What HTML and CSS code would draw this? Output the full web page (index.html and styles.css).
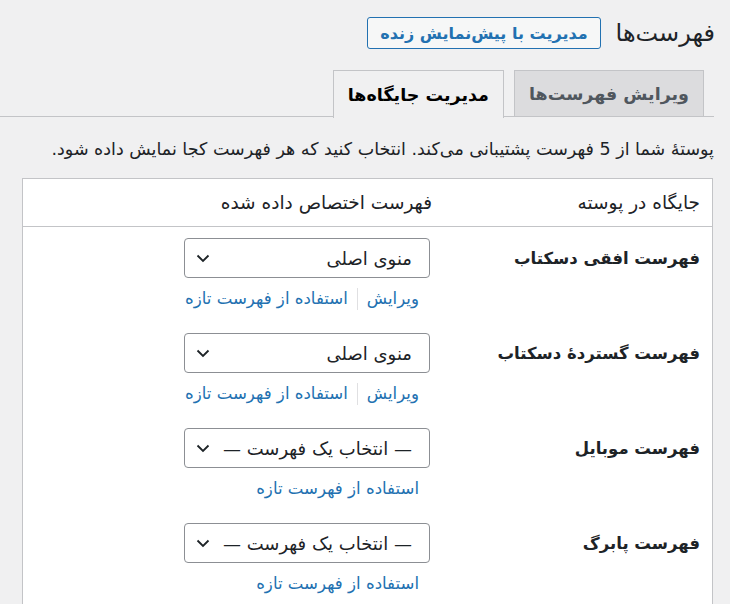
FILE: index.html
```html
<!DOCTYPE html>
<html lang="fa" dir="rtl">
<head>
<meta charset="utf-8">
<title>فهرست‌ها</title>
<link rel="stylesheet" href="styles.css">
</head>
<body>
<div class="wrap">
  <div class="title-row">
    <h1 class="title">فهرست‌ها</h1>
    <a class="title-action" href="#">مدیریت با پیش‌نمایش زنده</a>
  </div>
  <nav class="tabs">
    <a class="tab" href="#">ویرایش فهرست‌ها</a>
    <a class="tab tab-active" href="#">مدیریت جایگاه‌ها</a>
  </nav>
  <p class="desc">پوستهٔ شما از 5 فهرست پشتیبانی می‌کند. انتخاب کنید که هر فهرست کجا نمایش داده شود.</p>
  <div class="table">
    <div class="thead">
      <div class="th-loc">جایگاه در پوسته</div>
      <div class="th-menu">فهرست اختصاص داده شده</div>
    </div>
    <div class="row">
      <div class="label">فهرست افقی دسکتاب</div>
      <div class="cell">
        <div class="select"><span>منوی اصلی</span><svg class="chev" viewBox="0 0 14 9" width="14" height="9"><path d="M1.5 1.5 L7 7 L12.5 1.5" fill="none" stroke="#1d2327" stroke-width="1.8"/></svg></div>
        <div class="links"><a href="#">ویرایش</a><span class="sep"></span><a href="#">استفاده از فهرست تازه</a></div>
      </div>
    </div>
    <div class="row">
      <div class="label">فهرست گستردهٔ دسکتاب</div>
      <div class="cell">
        <div class="select"><span>منوی اصلی</span><svg class="chev" viewBox="0 0 14 9" width="14" height="9"><path d="M1.5 1.5 L7 7 L12.5 1.5" fill="none" stroke="#1d2327" stroke-width="1.8"/></svg></div>
        <div class="links"><a href="#">ویرایش</a><span class="sep"></span><a href="#">استفاده از فهرست تازه</a></div>
      </div>
    </div>
    <div class="row">
      <div class="label">فهرست موبایل</div>
      <div class="cell">
        <div class="select"><span>— انتخاب یک فهرست —</span><svg class="chev" viewBox="0 0 14 9" width="14" height="9"><path d="M1.5 1.5 L7 7 L12.5 1.5" fill="none" stroke="#1d2327" stroke-width="1.8"/></svg></div>
        <div class="links"><a href="#">استفاده از فهرست تازه</a></div>
      </div>
    </div>
    <div class="row">
      <div class="label">فهرست پابرگ</div>
      <div class="cell">
        <div class="select"><span>— انتخاب یک فهرست —</span><svg class="chev" viewBox="0 0 14 9" width="14" height="9"><path d="M1.5 1.5 L7 7 L12.5 1.5" fill="none" stroke="#1d2327" stroke-width="1.8"/></svg></div>
        <div class="links"><a href="#">استفاده از فهرست تازه</a></div>
      </div>
    </div>
  </div>
</div>
</body>
</html>
```
FILE: styles.css
```css
html, body {
  margin: 0;
  padding: 0;
  background: #f0f0f1;
}
body {
  direction: rtl;
  font-family: "DejaVu Sans", sans-serif;
  color: #1d2327;
  overflow: hidden;
  height: 604px;
}
.wrap {
  padding: 17px 15px 0 0;
}
.title-row {
  display: flex;
  align-items: center;
  gap: 15px;
  height: 32px;
  padding-left: 22px;
}
.title {
  margin: 0;
  font-size: 24px;
  font-weight: 400;
  line-height: 32px;
  color: #1d2327;
}
.title-action {
  display: inline-flex;
  align-items: center;
  height: 30px;
  padding: 0 12px;
  border: 1px solid #2271b1;
  border-radius: 3px;
  background: #f6f7f7;
  color: #2271b1;
  font-size: 16px;
  font-weight: 700;
  text-decoration: none;
}
.tabs {
  display: flex;
  gap: 10px;
  margin-top: 21px;
  margin-right: 1px;
  padding-right: 10px;
  border-bottom: 1px solid #c3c4c7;
  height: 46px;
}
.tab {
  display: flex;
  align-items: center;
  padding: 0 14px;
  border: 1px solid #c3c4c7;
  border-bottom: none;
  background: #dcdcde;
  color: #50575e;
  font-size: 17.5px;
  font-weight: 700;
  text-decoration: none;
}
.tab-active {
  background: #f0f0f1;
  color: #000;
  height: 47px;
}
.desc {
  margin: 22px 1px 0 0;
  font-size: 17.5px;
  line-height: 20px;
  color: #1d2327;
}
.table {
  margin: 19px 2px 0 22px;
  background: #fff;
  border: 1px solid #c3c4c7;
}
.thead {
  display: grid;
  grid-template-columns: 282px 1fr;
  height: 47px;
  align-items: center;
  border-bottom: 1px solid #c3c4c7;
  font-size: 18.5px;
}
.th-loc {
  padding-right: 12px;
}
.th-menu {
  margin-right: -2px;
}
.row {
  display: grid;
  grid-template-columns: 282px 1fr;
  height: 95px;
  align-items: start;
}
.label {
  padding: 22px 12px 0 0;
  font-size: 16.5px;
  font-weight: 700;
  color: #1d2327;
}
.cell {
  padding-top: 11px;
}
.select {
  box-sizing: border-box;
  width: 246px;
  height: 40px;
  display: flex;
  align-items: center;
  justify-content: space-between;
  padding: 0 17px 0 11px;
  border: 1px solid #8c8f94;
  border-radius: 4px;
  background: #fff;
  font-size: 18px;
  color: #1d2327;
}
.chev {
  display: block;
}
.links {
  display: flex;
  align-items: center;
  margin-top: 9px;
  padding-right: 11px;
  font-size: 16.6px;
  line-height: 24px;
}
.links a {
  color: #2271b1;
  text-decoration: none;
}
.sep {
  width: 1px;
  height: 22px;
  background: #e0e0e2;
  margin: 0 9px;
}
```
